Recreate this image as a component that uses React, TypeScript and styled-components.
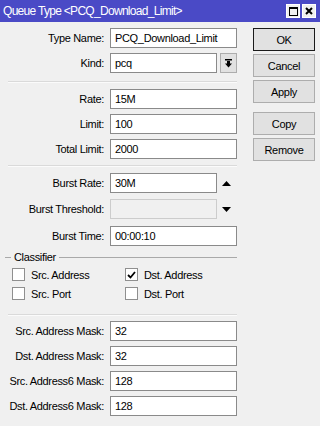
import React from "react";
import styled, { createGlobalStyle } from "styled-components";

const Global = createGlobalStyle`
  html, body { margin: 0; padding: 0; background: #f0f0f0; }
  * { box-sizing: border-box; }
`;

const Window = styled.div`
  width: 320px;
  height: 426px;
  background: #f0f0f0;
  font-family: "Liberation Sans", Arial, sans-serif;
  font-size: 11px;
  letter-spacing: -0.33px;
  color: #000;
  display: flex;
  flex-direction: column;
  overflow: hidden;
`;

const TitleBar = styled.div`
  height: 22px;
  background: #4a4ac6;
  display: flex;
  align-items: center;
  padding: 0 4px 0 3px;
  color: #fff;
  font-size: 12px;
  letter-spacing: -0.7px;
`;

const Title = styled.div`
  flex: 1;
`;

const TitleBtn = styled.div`
  width: 14px;
  height: 14px;
  background: #f0f0f0;
  border: 1px solid #fff;
  margin-left: 2px;
  display: flex;
  align-items: center;
  justify-content: center;
`;

const Body = styled.div`
  flex: 1;
  display: flex;
  padding: 6px 4px 0 8px;
  gap: 16px;
`;

const Form = styled.div`
  width: 229px;
  display: flex;
  flex-direction: column;
`;

const Row = styled.div<{ $mt?: number }>`
  display: flex;
  align-items: center;
  height: 20px;
  margin-top: ${(p) => p.$mt ?? 5}px;
`;

const Label = styled.div`
  width: 96px;
  text-align: right;
  margin-right: 6px;
  white-space: nowrap;
`;

const Input = styled.div<{ $disabled?: boolean; $w?: number }>`
  width: ${(p) => p.$w ?? 127}px;
  height: 20px;
  border: 1px solid ${(p) => (p.$disabled ? "#cccccc" : "#8a8a8a")};
  background: ${(p) => (p.$disabled ? "#f0f0f0" : "#fff")};
  padding: 0 4px;
  display: flex;
  align-items: center;
`;

const DropBtn = styled.div`
  width: 17px;
  height: 20px;
  margin-left: 3px;
  border: 1px solid #adadad;
  background: #e1e1e1;
  display: flex;
  align-items: center;
  justify-content: center;
`;

const ArrowSlot = styled.div`
  width: 19px;
  display: flex;
  justify-content: center;
`;

const Separator = styled.div<{ $mt?: number }>`
  background: #dadada;
  border-bottom: 1px solid #fbfbfb;
  height: 2px;
  margin-top: ${(p) => p.$mt ?? 6}px;
  width: 229px;
`;

const Group = styled.div`
  margin-top: 5px;
  margin-left: -3px;
  display: flex;
  align-items: center;
  gap: 3px;
`;

const GroupLine = styled.div<{ $w?: number }>`
  height: 1px;
  background: #a9a9a9;
  width: ${(p) => (p.$w ? `${p.$w}px` : "auto")};
  flex: ${(p) => (p.$w ? "none" : "1")};
`;

const CheckGrid = styled.div`
  display: grid;
  grid-template-columns: 113px 110px;
  row-gap: 6px;
  margin-top: 5px;
  margin-left: 4px;
`;

const CheckItem = styled.div`
  display: flex;
  align-items: center;
  height: 13px;
`;

const Box = styled.div`
  width: 13px;
  height: 13px;
  border: 1px solid #8f8f8f;
  background: #fff;
  margin-right: 6px;
  display: flex;
  align-items: center;
  justify-content: center;
`;

const Buttons = styled.div`
  display: flex;
  flex-direction: column;
  width: 62px;
`;

const Btn = styled.div<{ $mt: number; $def?: boolean }>`
  height: 23px;
  margin-top: ${(p) => p.$mt}px;
  border: 1px solid ${(p) => (p.$def ? "#1a1a1a" : "#adadad")};
  background: #e1e1e1;
  display: flex;
  align-items: center;
  justify-content: center;
`;

const Up = () => (
  <svg width="9" height="5" viewBox="0 0 9 5"><path d="M0 5 L4.5 0 L9 5 Z" fill="#000" /></svg>
);
const Down = () => (
  <svg width="9" height="5" viewBox="0 0 9 5"><path d="M0 0 L4.5 5 L9 0 Z" fill="#000" /></svg>
);

const Check = () => (
  <svg width="9" height="8" viewBox="0 0 9 8"><path d="M1 4 L3.5 6.5 L8 1" stroke="#000" strokeWidth="1.8" fill="none" /></svg>
);

const Field = ({ label, value, mt, w, disabled, after }: { label: string; value?: string; mt?: number; w?: number; disabled?: boolean; after?: React.ReactNode }) => (
  <Row $mt={mt}>
    <Label>{label}</Label>
    <Input $w={w} $disabled={disabled}>{value}</Input>
    {after}
  </Row>
);

export default function App() {
  return (
    <>
      <Global />
      <Window>
        <TitleBar>
          <Title>Queue Type &lt;PCQ_Download_Limit&gt;</Title>
          <TitleBtn>
            <svg width="9" height="9" viewBox="0 0 9 9"><rect x="0.5" y="0.5" width="8" height="8" fill="none" stroke="#000" /><rect x="0" y="0" width="9" height="2" fill="#000" /></svg>
          </TitleBtn>
          <TitleBtn>
            <svg width="8" height="8" viewBox="0 0 8 8"><path d="M1 1 L7 7 M7 1 L1 7" stroke="#000" strokeWidth="2" /></svg>
          </TitleBtn>
        </TitleBar>
        <Body>
          <Form>
            <Field label="Type Name:" value="PCQ_Download_Limit" mt={0} />
            <Field
              label="Kind:"
              value="pcq"
              w={107}
              after={
                <DropBtn>
                  <svg width="9" height="9" viewBox="0 0 9 9"><rect x="1" y="0" width="7" height="1.5" fill="#000" /><path d="M3 2 H6 V4.5 H8 L4.5 8.5 L1 4.5 H3 Z" fill="#000" /></svg>
                </DropBtn>
              }
            />
            <Separator $mt={8} />
            <Field label="Rate:" value="15M" mt={6} />
            <Field label="Limit:" value="100" />
            <Field label="Total Limit:" value="2000" />
            <Separator $mt={6} />
            <Field label="Burst Rate:" value="30M" mt={6} w={107} after={<ArrowSlot><Up /></ArrowSlot>} />
            <Field label="Burst Threshold:" w={107} disabled mt={6} after={<ArrowSlot><Down /></ArrowSlot>} />
            <Field label="Burst Time:" value="00:00:10" mt={7} />
            <Group>
              <GroupLine $w={6} />
              <span>Classifier</span>
              <GroupLine />
            </Group>
            <CheckGrid>
              <CheckItem><Box />Src. Address</CheckItem>
              <CheckItem><Box><Check /></Box>Dst. Address</CheckItem>
              <CheckItem><Box />Src. Port</CheckItem>
              <CheckItem><Box />Dst. Port</CheckItem>
            </CheckGrid>
            <Separator $mt={14} />
            <Field label="Src. Address Mask:" value="32" mt={5} />
            <Field label="Dst. Address Mask:" value="32" />
            <Field label="Src. Address6 Mask:" value="128" />
            <Field label="Dst. Address6 Mask:" value="128" />
          </Form>
          <Buttons>
            <Btn $mt={0} $def>OK</Btn>
            <Btn $mt={3}>Cancel</Btn>
            <Btn $mt={3}>Apply</Btn>
            <Btn $mt={9}>Copy</Btn>
            <Btn $mt={3}>Remove</Btn>
          </Buttons>
        </Body>
      </Window>
    </>
  );
}
